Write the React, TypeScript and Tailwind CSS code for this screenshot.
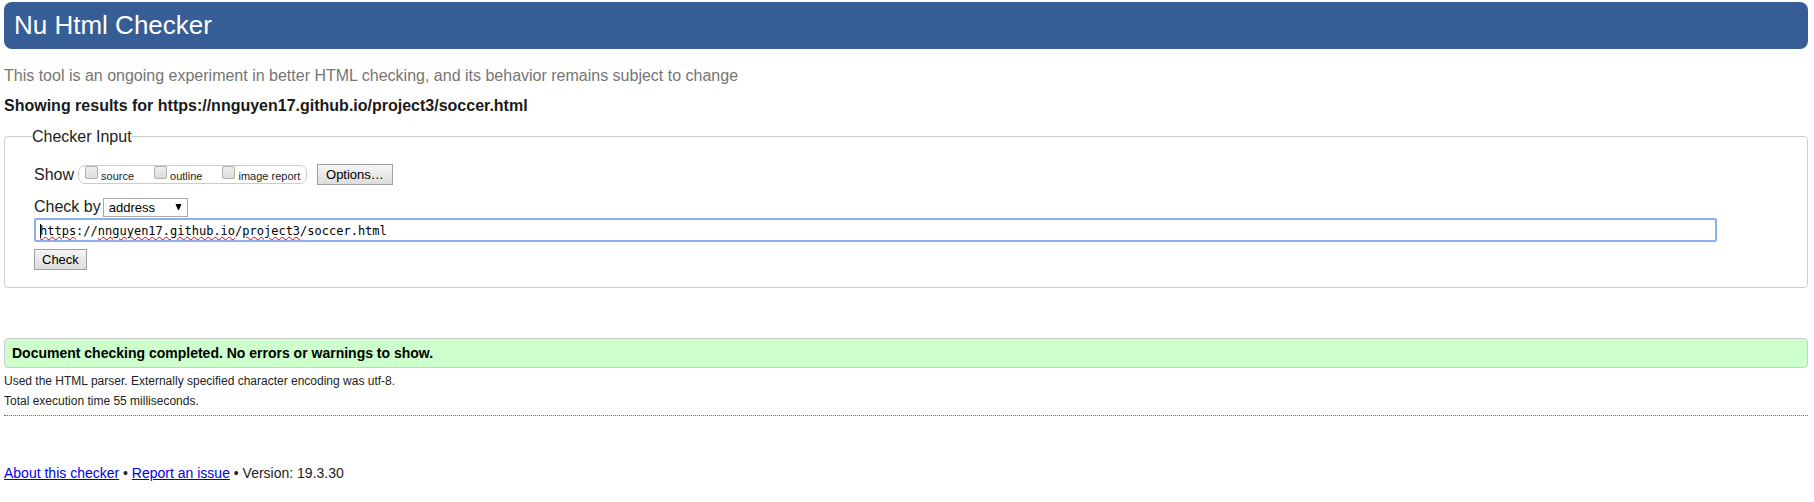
import { useState } from 'react';

const views = ['source', 'outline', 'image report'];

const buttonStyle =
  'h-[21px] border border-[#a0a0a0] bg-linear-to-b from-[#f5f5f5] to-[#dddddd] text-[13px] leading-[19px] text-black';

const misspelled = 'underline decoration-wavy decoration-red-600 decoration-1 underline-offset-1';

function AddressField() {
  const initial = 'https://nnguyen17.github.io/project3/soccer.html';
  const [address, setAddress] = useState(initial);
  return (
    <div className="relative mt-px mr-[61px] font-['DejaVu_Sans_Mono',monospace] text-[12px] leading-[18px]">
      <input
        type="text"
        aria-label="Address"
        spellCheck={false}
        value={address}
        onChange={(e) => setAddress(e.target.value)}
        className="block h-6 w-full rounded-[2px] border-2 border-[#8ab0f0] bg-white px-1 pt-[2px] text-black outline-none"
      />
      {address === initial && (
        <div aria-hidden="true" className="pointer-events-none absolute inset-0 flex items-center overflow-hidden px-[6px] pt-[2px] text-transparent">
          <span className="h-[14px] w-px bg-black" />
          <span className="-ml-px whitespace-pre">
            <span className={misspelled}>https</span>://<span className={misspelled}>nnguyen17.github.io</span>/
            <span className={misspelled}>project3</span>
          </span>
        </div>
      )}
    </div>
  );
}

export default function App() {
  return (
    <div className="pt-[2px] pr-[6px] pb-4 pl-1 font-['Liberation_Sans',Arial,sans-serif] text-[16px] leading-5 text-[#222222]">
      <header>
        <h1 className="rounded-lg bg-[#365d95] px-[10px] pt-[7px] pb-2 text-[26px] leading-8 text-white">
          Nu Html Checker
        </h1>
        <p className="mt-[17px] text-[#757575]">
          This tool is an ongoing experiment in better HTML checking, and its behavior remains subject to change
        </p>
      </header>

      <main>
        <h2 className="mt-[10px] font-bold text-[#1a1a1a]">
          Showing results for https://nnguyen17.github.io/project3/soccer.html
        </h2>

        <form onSubmit={(e) => e.preventDefault()}>
          <fieldset className="mt-[9px] rounded-[4px] border border-[#cccccc] px-[29px] pb-[17px]">
            <legend className="-ml-[2px] pt-[2px]">Checker Input</legend>

            <div className="mt-[17px] flex items-center">
              <span>Show</span>
              <div className="ml-1 flex h-[19px] w-[229px] items-start gap-5 rounded-[7px] border border-[#cccccc] pl-[6px] text-[11px] leading-5">
                {views.map((view) => (
                  <label key={view} className="flex gap-[3px] whitespace-nowrap">
                    <input
                      type="checkbox"
                      className="size-[13px] appearance-none rounded-[2px] border border-[#b0b0b0] bg-linear-to-b from-[#eeeeee] to-[#dcdcdc] checked:bg-[#666666]"
                    />
                    {view}
                  </label>
                ))}
              </div>
              <button type="button" className={`ml-[10px] px-2 ${buttonStyle}`}>
                Options…
              </button>
            </div>

            <div className="mt-3 flex items-center">
              <label htmlFor="method">Check by</label>
              <div className="relative ml-[2px]">
                <select
                  id="method"
                  className="block h-[19px] w-[85px] appearance-none border border-[#a9a9a9] bg-white pl-[5px] text-[13px] leading-[17px] text-black"
                >
                  <option>address</option>
                  <option>file upload</option>
                  <option>text input</option>
                </select>
                <svg className="pointer-events-none absolute top-[6px] right-[6px]" width="7" height="6" viewBox="0 0 7 6">
                  <path d="M0.500 0h6L4 6H3z" fill="#000" />
                </svg>
              </div>
            </div>

            <AddressField />

            <button type="submit" className={`mt-[7px] block px-[7px] ${buttonStyle}`}>
              Check
            </button>
          </fieldset>
        </form>

        <section>
          <p className="mt-[50px] rounded-[4px] border border-[#cccccc] bg-[#ccffcc] px-[7px] py-1 text-[14px] leading-5 font-bold text-black">
            Document checking completed. No errors or warnings to show.
          </p>
          <p className="mt-[3px] text-[12px]">
            Used the HTML parser. Externally specified character encoding was utf-8.
          </p>
          <p className="text-[12px]">Total execution time 55 milliseconds.</p>
        </section>
      </main>

      <footer className="mt-[4px] border-t border-dotted border-[#666666] pt-[47px] text-[14px]">
        <a href="#about" className="text-[#0000ee] underline">About this checker</a>
        {' • '}
        <a href="#issues" className="text-[#0000ee] underline">Report an issue</a>
        {' • Version: 19.3.30'}
      </footer>
    </div>
  );
}
